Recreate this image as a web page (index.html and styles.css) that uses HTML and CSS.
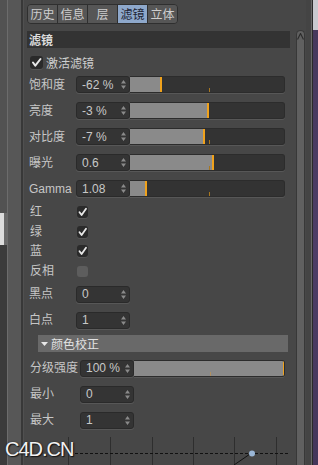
FILE: index.html
```html
<!DOCTYPE html>
<html>
<head>
<meta charset="utf-8">
<link rel="stylesheet" href="styles.css">
</head>
<body>
<div class="app">
  <div class="lstrip">
    <div class="lc1"><div class="s1"></div><div class="s2"></div><div class="s3"></div></div>
    <div class="lc2"></div>
    <div class="lc3"></div>
    <div class="lc4"></div>
  </div>
  <div class="panel">
    <div class="tabs">
      <div class="tab">历史</div>
      <div class="tab">信息</div>
      <div class="tab">层</div>
      <div class="tab sel">滤镜</div>
      <div class="tab">立体</div>
    </div>
    <div class="hdr">滤镜</div>
    <div class="act">
      <span class="cb big"><svg viewBox="0 0 13 13" width="13" height="13"><path d="M3 6.5 L5.3 9.6 L10.5 3" fill="none" stroke="#e8e8e8" stroke-width="2" stroke-linecap="round" stroke-linejoin="round"/></svg></span>
      <span class="acttxt">激活滤镜</span>
    </div>

    <div class="row">
      <span class="lbl">饱和度</span>
      <span class="inp"><span>-62 %</span><svg class="spin" viewBox="0 0 5 9" width="5" height="9"><path d="M2.5 0 L5 3.5 H0Z M2.5 9 L0 5.5 H5Z"/></svg></span>
      <span class="slider"><span class="fill" style="width:30px"></span><span class="tick"></span></span>
    </div>
    <div class="row">
      <span class="lbl">亮度</span>
      <span class="inp"><span>-3 %</span><svg class="spin" viewBox="0 0 5 9" width="5" height="9"><path d="M2.5 0 L5 3.5 H0Z M2.5 9 L0 5.5 H5Z"/></svg></span>
      <span class="slider"><span class="fill" style="width:77px"></span></span>
    </div>
    <div class="row">
      <span class="lbl">对比度</span>
      <span class="inp"><span>-7 %</span><svg class="spin" viewBox="0 0 5 9" width="5" height="9"><path d="M2.5 0 L5 3.5 H0Z M2.5 9 L0 5.5 H5Z"/></svg></span>
      <span class="slider"><span class="fill" style="width:73px"></span><span class="tick"></span></span>
    </div>
    <div class="row">
      <span class="lbl">曝光</span>
      <span class="inp"><span>0.6</span><svg class="spin" viewBox="0 0 5 9" width="5" height="9"><path d="M2.5 0 L5 3.5 H0Z M2.5 9 L0 5.5 H5Z"/></svg></span>
      <span class="slider"><span class="fill" style="width:82px"></span><span class="tick"></span></span>
    </div>
    <div class="row">
      <span class="lbl">Gamma</span>
      <span class="inp"><span>1.08</span><svg class="spin" viewBox="0 0 5 9" width="5" height="9"><path d="M2.5 0 L5 3.5 H0Z M2.5 9 L0 5.5 H5Z"/></svg></span>
      <span class="slider"><span class="fill" style="width:15px"></span><span class="tick"></span></span>
    </div>

    <div class="crow">
      <span class="lbl">红</span>
      <span class="cb"><svg viewBox="0 0 11 12" width="11" height="12"><path d="M2.5 6.2 L4.6 9 L9 2.8" fill="none" stroke="#e8e8e8" stroke-width="1.8" stroke-linecap="round" stroke-linejoin="round"/></svg></span>
    </div>
    <div class="crow">
      <span class="lbl">绿</span>
      <span class="cb"><svg viewBox="0 0 11 12" width="11" height="12"><path d="M2.5 6.2 L4.6 9 L9 2.8" fill="none" stroke="#e8e8e8" stroke-width="1.8" stroke-linecap="round" stroke-linejoin="round"/></svg></span>
    </div>
    <div class="crow">
      <span class="lbl">蓝</span>
      <span class="cb"><svg viewBox="0 0 11 12" width="11" height="12"><path d="M2.5 6.2 L4.6 9 L9 2.8" fill="none" stroke="#e8e8e8" stroke-width="1.8" stroke-linecap="round" stroke-linejoin="round"/></svg></span>
    </div>
    <div class="crow">
      <span class="lbl">反相</span>
      <span class="cb off"></span>
    </div>

    <div class="row">
      <span class="lbl">黑点</span>
      <span class="inp"><span>0</span><svg class="spin" viewBox="0 0 5 9" width="5" height="9"><path d="M2.5 0 L5 3.5 H0Z M2.5 9 L0 5.5 H5Z"/></svg></span>
    </div>
    <div class="row">
      <span class="lbl">白点</span>
      <span class="inp"><span>1</span><svg class="spin" viewBox="0 0 5 9" width="5" height="9"><path d="M2.5 0 L5 3.5 H0Z M2.5 9 L0 5.5 H5Z"/></svg></span>
    </div>

    <div class="sect"><svg class="tri" viewBox="0 0 7 4" width="7" height="4"><path d="M0 0 H7 L3.5 4Z"/></svg><span>颜色校正</span></div>

    <div class="row sub first">
      <span class="lbl">分级强度</span>
      <span class="inp"><span>100 %</span><svg class="spin" viewBox="0 0 5 9" width="5" height="9"><path d="M2.5 0 L5 3.5 H0Z M2.5 9 L0 5.5 H5Z"/></svg></span>
      <span class="slider wide"><span class="fill" style="width:149px"></span><span class="tick t2"></span></span>
    </div>
    <div class="row sub">
      <span class="lbl">最小</span>
      <span class="inp"><span>0</span><svg class="spin" viewBox="0 0 5 9" width="5" height="9"><path d="M2.5 0 L5 3.5 H0Z M2.5 9 L0 5.5 H5Z"/></svg></span>
    </div>
    <div class="row sub">
      <span class="lbl">最大</span>
      <span class="inp"><span>1</span><svg class="spin" viewBox="0 0 5 9" width="5" height="9"><path d="M2.5 0 L5 3.5 H0Z M2.5 9 L0 5.5 H5Z"/></svg></span>
    </div>

    <div class="graph">
      <svg viewBox="0 0 271 30" width="271" height="30">
        <g stroke="#2e2e2e" stroke-width="1">
          <line x1="44.5" y1="2" x2="44.5" y2="30"/>
          <line x1="86.5" y1="2" x2="86.5" y2="30"/>
          <line x1="128.5" y1="2" x2="128.5" y2="30"/>
          <line x1="169.5" y1="2" x2="169.5" y2="30"/>
          <line x1="210.5" y1="2" x2="210.5" y2="30"/>
          <line x1="252.5" y1="2" x2="252.5" y2="30"/>
        </g>
        <line x1="46" y1="18.5" x2="264" y2="18.5" stroke="#111" stroke-width="1" stroke-dasharray="3 2"/>
        <line x1="210" y1="30" x2="226" y2="19" stroke="#111" stroke-width="1"/>
        <circle cx="228" cy="18.5" r="3" fill="#9ab6d6"/>
      </svg>
    </div>
  </div>
  <div class="sbar">
    <div class="track">
      <svg class="arrow" viewBox="0 0 7 7" width="7" height="7"><path d="M0.5 6.5 L3.5 0.5 L6.5 6.5" fill="none" stroke="#2c2c2c" stroke-width="1.2"/></svg>
    </div>
  </div>
  <div class="rstrip">
    <div class="r1"></div><div class="r2"></div><div class="r3"></div>
    <div class="r4"><div class="r4a"></div><div class="r4b"></div></div>
  </div>
</div>
<div class="wm">C4D.CN</div>
</body>
</html>
```

FILE: styles.css
```css
html, body {
  margin: 0;
  padding: 0;
}
body {
  width: 318px;
  height: 465px;
  overflow: hidden;
  position: relative;
  background: #474747;
  font-family: "Liberation Sans", "Noto Sans CJK SC", sans-serif;
  font-size: 12px;
  color: #c6c6c6;
}
.app {
  display: flex;
  height: 465px;
}

/* left strip */
.lstrip {
  display: flex;
  width: 24px;
  flex: none;
}
.lc1 {
  width: 7px;
  display: flex;
  flex-direction: column;
}
.lc1 .s1 { height: 213px; background: #525252; }
.lc1 .s2 { height: 32px; background: linear-gradient(90deg, #dcdcdc 0 4px, #6a6a6a 4px); }
.lc1 .s3 { flex: 1; background: #3b3b3b; }
.lc2 { width: 1px; background: #6c6c6c; }
.lc3 { width: 13px; background: #575757; }
.lc4 { width: 3px; background: linear-gradient(90deg, #383838 0 2px, #505050 2px); }

/* panel */
.panel {
  width: 271px;
  flex: none;
  box-sizing: border-box;
  padding: 4px 0 0 3px;
  display: flex;
  flex-direction: column;
  overflow: hidden;
}
.tabs {
  display: flex;
  align-self: flex-start;
  border: 1px solid #2f2f2f;
  border-radius: 4px;
  overflow: hidden;
  height: 18px;
}
.tab {
  width: 29px;
  border-right: 1px solid #2f2f2f;
  background: #565656;
  color: #cfcfcf;
  font-family: "Noto Sans CJK SC", sans-serif;
  font-size: 12px;
  line-height: 18px;
  text-align: center;
}
.tab:last-child { border-right: none; }
.tab.sel {
  background: #8ea8cb;
  color: #1d2434;
}
.hdr {
  margin-top: 7px;
  width: 263px;
  height: 17px;
  background: #333333;
  color: #dcdcdc;
  font-family: "Noto Sans CJK SC", sans-serif;
  font-weight: 700;
  font-size: 12px;
  line-height: 17px;
  padding-left: 2px;
  box-sizing: border-box;
}
.act {
  height: 24px;
  padding: 6px 0 0 3px;
  box-sizing: border-box;
  display: flex;
  align-items: center;
  gap: 3px;
}
.acttxt {
  font-family: "Noto Sans CJK SC", sans-serif;
  line-height: 14px;
  color: #cfcfcf;
}
.cb {
  width: 11px;
  height: 12px;
  background: #2a2a2a;
  border-radius: 3px;
  display: flex;
  box-shadow: 0 1px 0 #555;
}
.cb.big {
  width: 13px;
  height: 13px;
}
.cb.off {
  background: #5d5d5d;
  box-shadow: none;
  height: 11px;
}

.row {
  height: 26px;
  display: flex;
  align-items: center;
}
.lbl {
  width: 49px;
  flex: none;
  padding-left: 2px;
  box-sizing: border-box;
  line-height: 14px;
  font-family: "Liberation Sans", "Noto Sans CJK SC", sans-serif;
}
.inp {
  width: 54px;
  height: 17px;
  flex: none;
  box-sizing: border-box;
  background: #343434;
  border: 1px solid #2a2a2a;
  border-radius: 3px;
  box-shadow: 0 1px 0 #575757;
  display: flex;
  align-items: center;
  justify-content: space-between;
  padding: 0 3px 0 5px;
  color: #c8c8c8;
  line-height: 14px;
}
.spin { fill: #8a8a8a; }
.slider {
  width: 155px;
  height: 17px;
  flex: none;
  box-sizing: border-box;
  background: #333333;
  border: 1px solid #2c2c2c;
  border-left: none;
  border-radius: 0 3px 3px 0;
  box-shadow: 0 1px 0 #575757;
  display: flex;
  position: relative;
  overflow: hidden;
}
.slider.wide { width: 151px; }
.fill {
  height: 100%;
  background: #8a8a8a;
  border-right: 2px solid #f0a21c;
  flex: none;
}
.tick {
  position: absolute;
  left: 79px;
  bottom: 0;
  width: 1px;
  height: 4px;
  background: #a8771f;
}
.tick.t2 { left: 76px; background: #b09060; }

.crow {
  height: 20px;
  display: flex;
  align-items: center;
}
.crow .lbl {
  width: 50px;
  padding-left: 3px;
}
.row + .crow, .crow:first-of-type { }

.sect {
  margin: 2px 0 0 11px;
  width: 250px;
  height: 17px;
  background: #696969;
  color: #e2e2e2;
  display: flex;
  align-items: center;
  gap: 3px;
  padding-left: 3px;
  box-sizing: border-box;
  font-family: "Noto Sans CJK SC", sans-serif;
  line-height: 14px;
}
.tri { fill: #e8e8e8; }

.row.sub .lbl {
  width: 53px;
  padding-left: 3px;
}
.row.sub.first { margin-top: 3px; }

.graph {
  margin-top: 2px;
  flex: 1;
  margin-left: -3px;
}
.graph svg { display: block; }

/* scrollbar */
.sbar {
  width: 11px;
  flex: none;
  padding-top: 30px;
  box-sizing: border-box;
  display: flex;
  justify-content: flex-start;
  padding-left: 1px;
}
.track {
  width: 9px;
  height: 100%;
  box-sizing: border-box;
  background: #606060;
  border: 1px solid #383838;
  border-bottom: none;
  border-radius: 5px 5px 0 0;
  display: flex;
  justify-content: center;
  padding-top: 2px;
}
.arrow { display: block; }

/* right strip */
.rstrip {
  width: 12px;
  flex: none;
  display: flex;
}
.r1 { width: 5px; background: #444444; }
.r2 { width: 1px; background: #686868; }
.r3 { width: 1px; background: #2a2a2a; }
.r4 {
  width: 5px;
  display: flex;
  flex-direction: column;
}
.r4a { height: 30px; background: #c9c9cf; }
.r4b { flex: 1; background: linear-gradient(180deg, #46385c, #4d3d66 50%, #44365a); }

/* watermark */
.wm {
  position: absolute;
  left: 5px;
  top: 438px;
  font-family: "Liberation Sans", sans-serif;
  font-size: 20px;
  letter-spacing: -1px;
  color: #f2f2f2;
  text-shadow: 0 0 2px #222, 1px 1px 1px #111;
}
```
